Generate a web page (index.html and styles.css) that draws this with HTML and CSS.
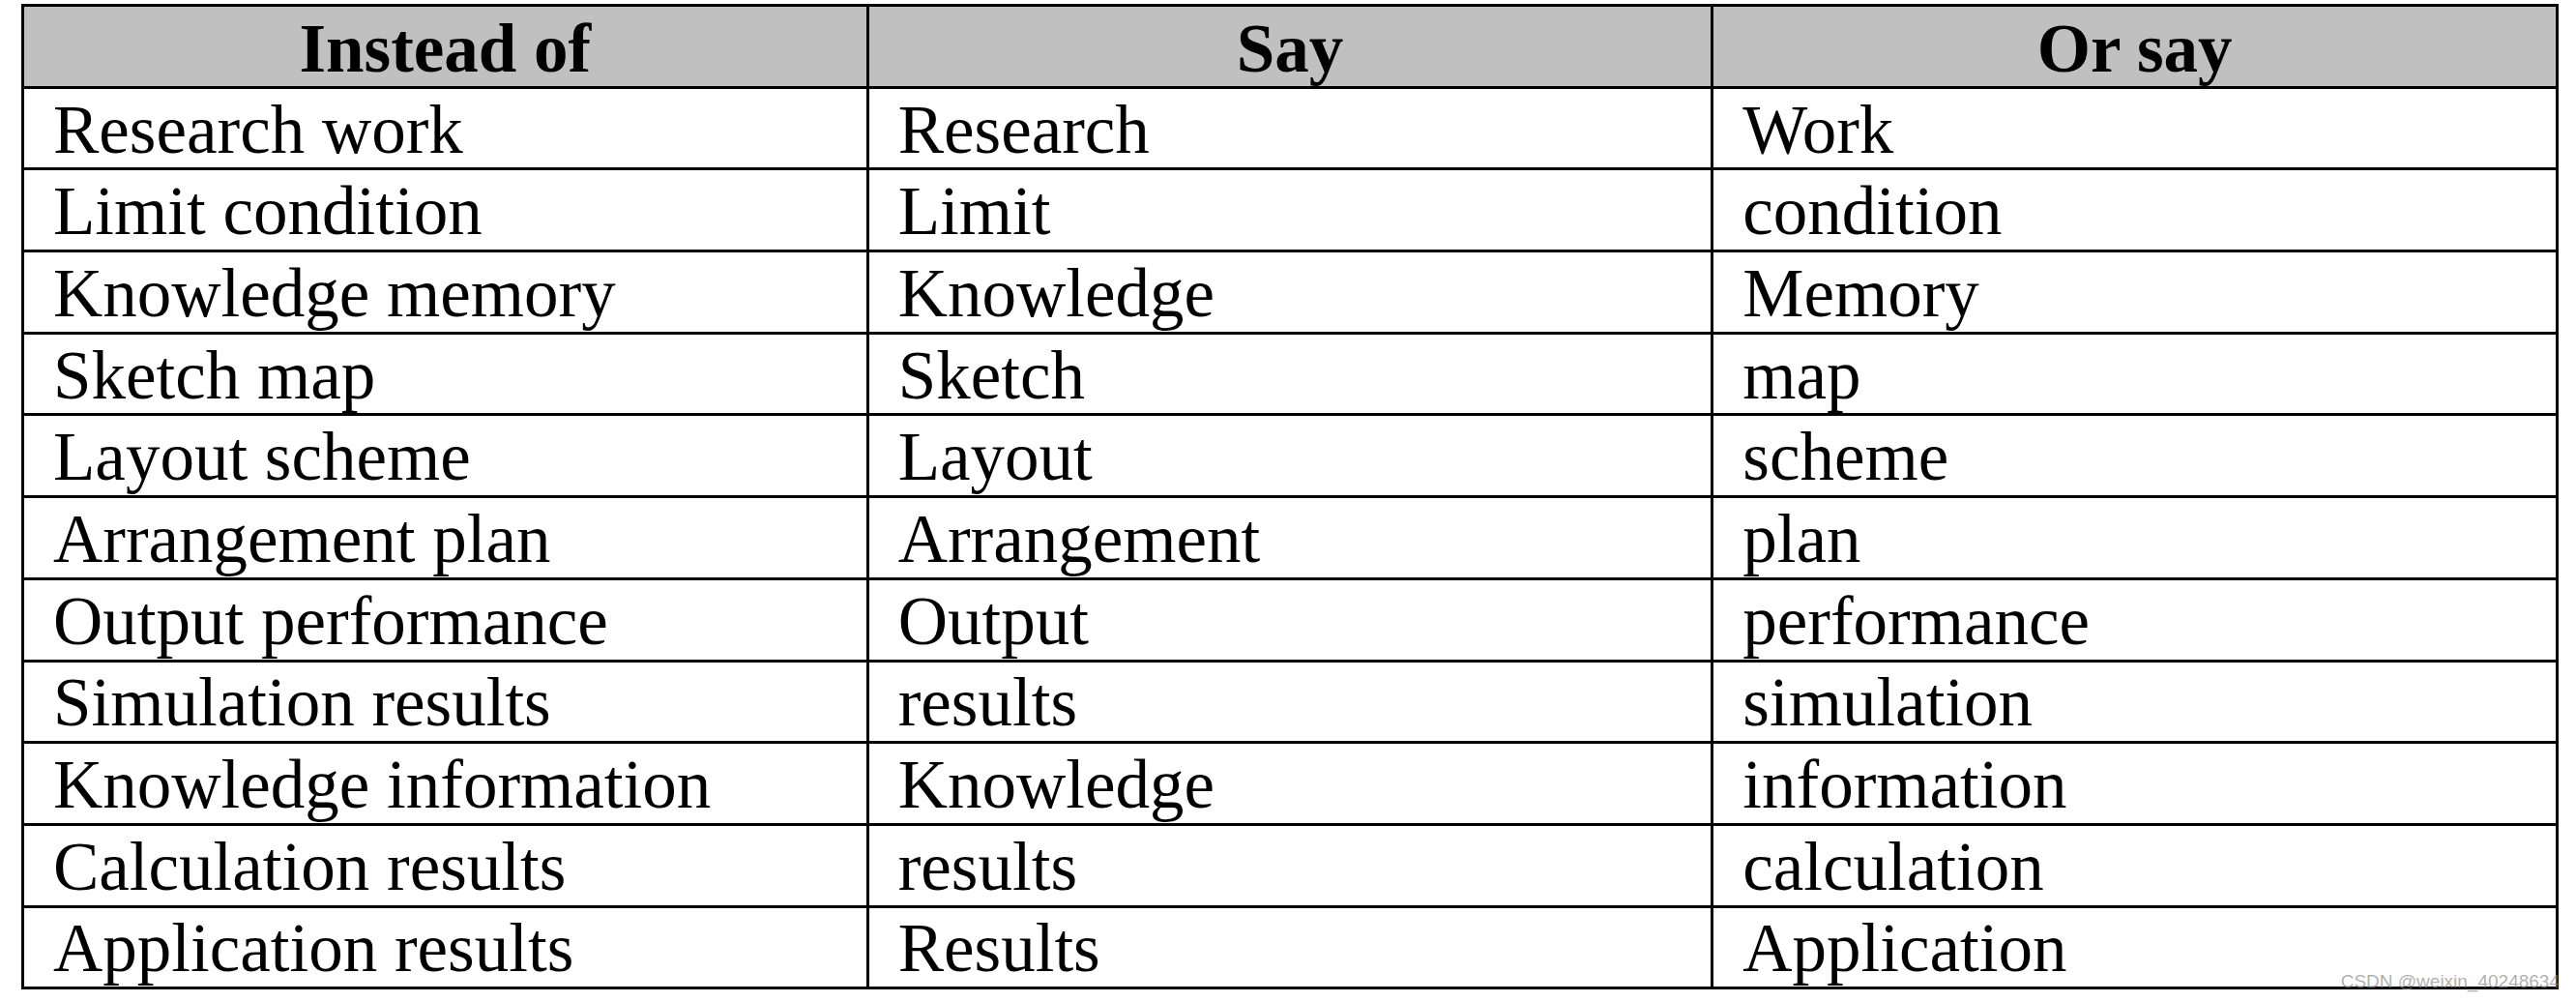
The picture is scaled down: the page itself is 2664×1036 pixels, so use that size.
FILE: index.html
```html
<!DOCTYPE html>
<html lang="en">
<head>
<meta charset="utf-8">
<title>Instead of / Say / Or say</title>
<link rel="stylesheet" href="styles.css">
</head>
<body>
<div class="page">
  <table class="words">
    <thead>
      <tr><th>Instead of</th><th>Say</th><th>Or say</th></tr>
    </thead>
    <tbody>
      <tr><td>Research work</td><td>Research</td><td>Work</td></tr>
      <tr><td>Limit condition</td><td>Limit</td><td>condition</td></tr>
      <tr><td>Knowledge memory</td><td>Knowledge</td><td>Memory</td></tr>
      <tr><td>Sketch map</td><td>Sketch</td><td>map</td></tr>
      <tr><td>Layout scheme</td><td>Layout</td><td>scheme</td></tr>
      <tr><td>Arrangement plan</td><td>Arrangement</td><td>plan</td></tr>
      <tr><td>Output performance</td><td>Output</td><td>performance</td></tr>
      <tr><td>Simulation results</td><td>results</td><td>simulation</td></tr>
      <tr><td>Knowledge information</td><td>Knowledge</td><td>information</td></tr>
      <tr><td>Calculation results</td><td>results</td><td>calculation</td></tr>
      <tr><td>Application results</td><td>Results</td><td>Application</td></tr>
    </tbody>
  </table>
  <span class="watermark">CSDN @weixin_40248634</span>
</div>
</body>
</html>
```

FILE: styles.css
```css
html, body {
  margin: 0;
  padding: 0;
  background: #ffffff;
}

.page {
  position: relative;
  width: 2664px;
  height: 1036px;
  padding: 4px 0 0 22px;
  box-sizing: border-box;
  overflow: hidden;
}

.words {
  width: 2624px;
  table-layout: fixed;
  border-collapse: separate;
  border-spacing: 3px;
  background: #000000;
  font-family: "Liberation Serif", "Times New Roman", serif;
  font-size: 71px;
  color: #000000;
}

.words tr {
  height: 81.7px;
}

.words th,
.words td {
  height: 81.7px;
  box-sizing: border-box;
  padding: 3px 0 0 30px;
  line-height: 1;
  vertical-align: middle;
  white-space: nowrap;
  overflow: hidden;
}

.words th {
  height: 81px;
  background: #c0c0c0;
  font-weight: bold;
  text-align: center;
  padding: 5px 0 0 0;
}

.words td {
  background: #ffffff;
  text-align: left;
}

.watermark {
  position: absolute;
  right: 17px;
  bottom: 12px;
  font-family: "Liberation Sans", Arial, sans-serif;
  font-size: 19px;
  line-height: 1;
  color: rgba(140, 140, 140, 0.7);
}
```
